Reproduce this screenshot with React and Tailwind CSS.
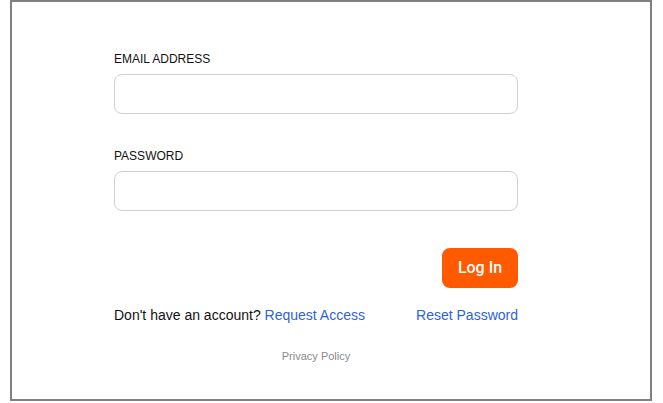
export default function App() {
  return (
    <div className="w-[663px] h-[403px] bg-white pl-[10px]" style={{ fontFamily: '"Liberation Sans", Arial, sans-serif' }}>
      <div className="w-[642px] h-[401px] border-2 border-[#808080] bg-white">
        <div className="w-[404px] ml-[102px] pt-[50px] flex flex-col">
          <label className="text-[12px] leading-[15px] text-[#111]">EMAIL ADDRESS</label>
          <div className="mt-[7px] h-[40px] rounded-[8px] border border-[#cfcfcf]"></div>
          <label className="mt-[35px] text-[12px] leading-[15px] text-[#111]">PASSWORD</label>
          <div className="mt-[7px] h-[40px] rounded-[8px] border border-[#cfcfcf]"></div>
          <div className="flex justify-end mt-[37px]">
            <button className="w-[76px] h-[40px] rounded-[8px] bg-[#ff5a00] text-white text-[16px] font-medium" style={{ fontFamily: 'Roboto, sans-serif' }}>Log In</button>
          </div>
          <div className="flex justify-between items-center mt-[19px] text-[14px] leading-[16px]">
            <span className="text-[#111]">Don't have an account? <span className="text-[#2f63d8]">Request Access</span></span>
            <span className="text-[#2f63d8]">Reset Password</span>
          </div>
          <div className="mt-[27px] text-center text-[11px] leading-[13px] text-[#8a8a8a]">Privacy Policy</div>
        </div>
      </div>
    </div>
  );
}
